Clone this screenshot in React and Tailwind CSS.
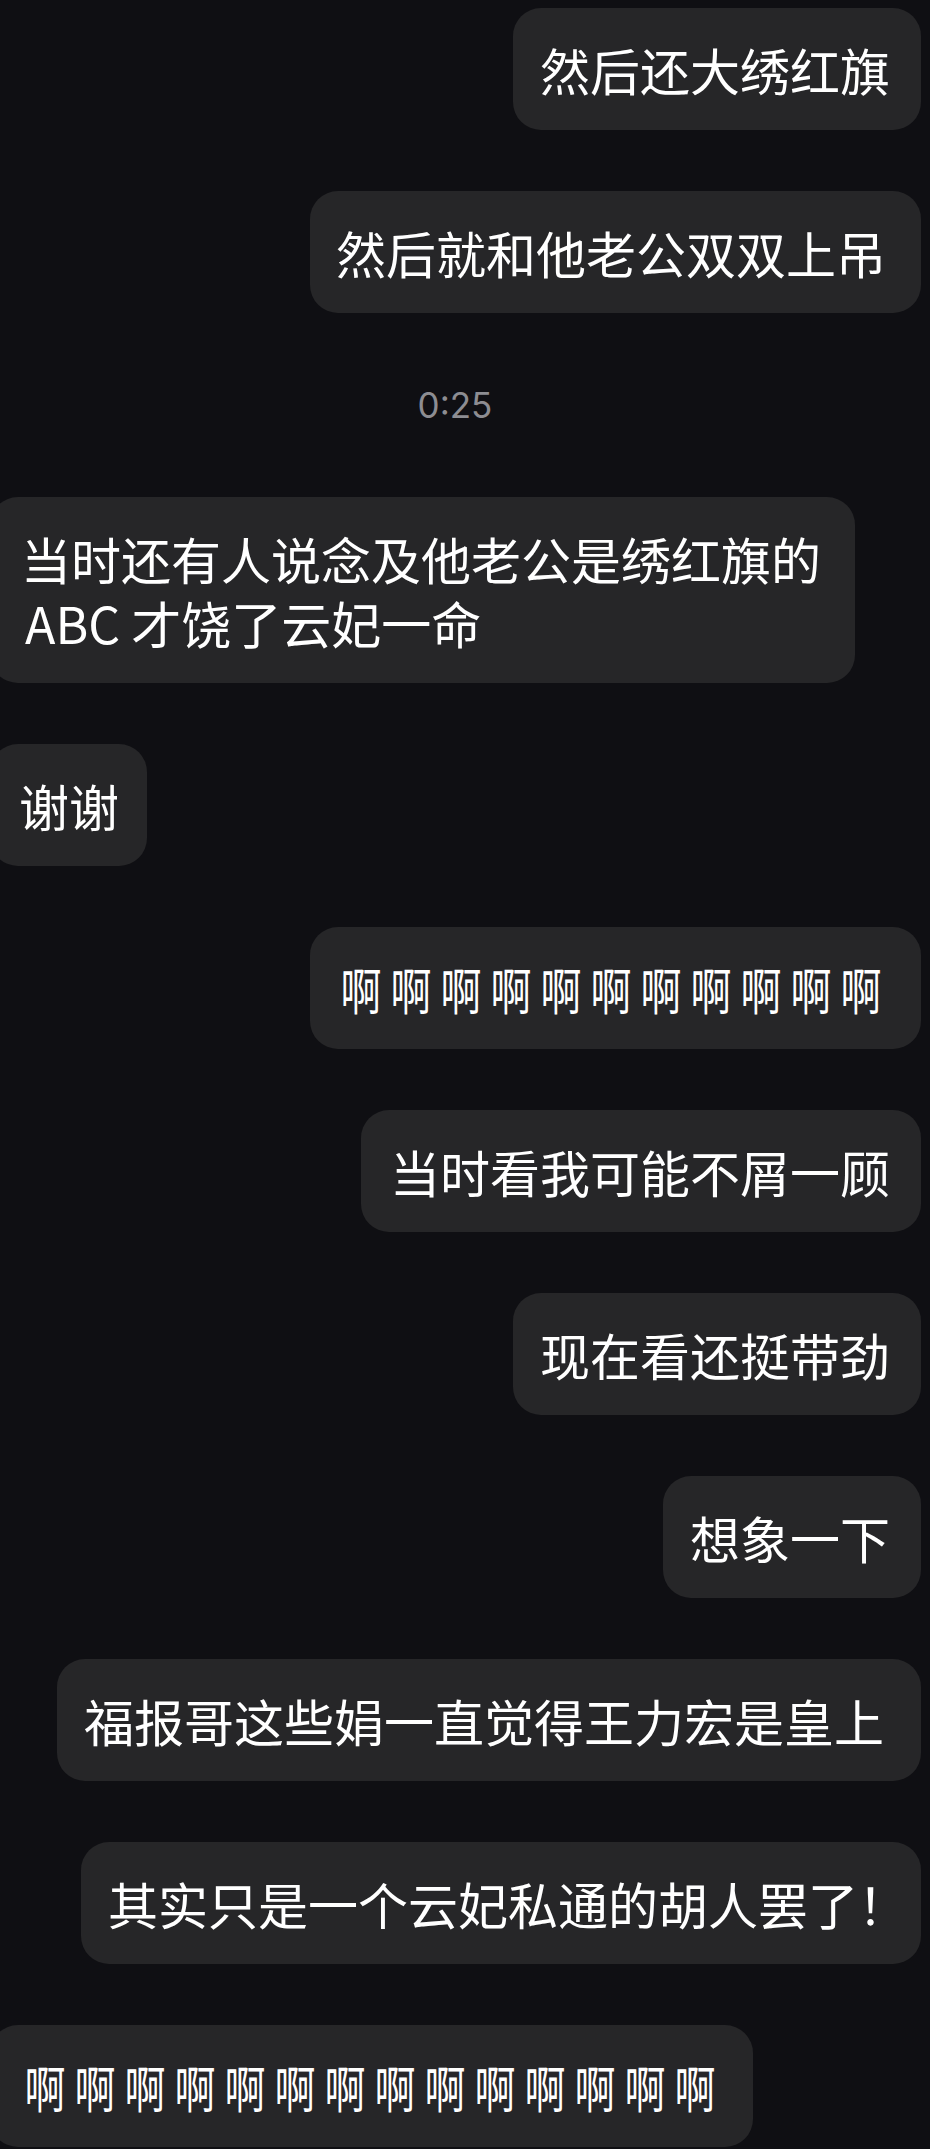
const cjk = "font-['Noto_Sans_CJK_SC','Noto_Sans_CJK_JP',sans-serif]";

// the 啊 rows are drawn narrow in the shot: one squeezed glyph per 50px cell
function Ah({ count }) {
  return (
    <>
      {Array.from({ length: count }).map((_, i) => (
        <span key={i} className="inline-block w-[50px] text-center scale-x-[0.82]">
          啊
        </span>
      ))}
    </>
  );
}

function Bubble({ side, width, pl, children }) {
  const base = `${width} ${pl} py-[29px] leading-[64px] text-[50px] text-white bg-[#262628] rounded-[28px] whitespace-nowrap overflow-hidden`;
  if (side === "right") {
    return (
      <div className="flex justify-end pr-[9px]">
        <div className={base}>{children}</div>
      </div>
    );
  }
  return (
    <div className="flex justify-start -ml-[10px]">
      <div className={base}>{children}</div>
    </div>
  );
}

export default function App() {
  return (
    <div className={`w-[930px] h-[2149px] overflow-hidden bg-[#0f0f13] ${cjk}`}>
      <div className="flex flex-col gap-[61px] pt-[8px]">
        <Bubble side="right" width="w-[408px]" pl="pl-[27px]">
          然后还大绣红旗
        </Bubble>
        <Bubble side="right" width="w-[611px]" pl="pl-[26px]">
          然后就和他老公双双上吊
        </Bubble>

        {/* time stamp */}
        <div className="h-[62px] flex items-center justify-center">
          <span className="font-['Inter',sans-serif] text-[35px] text-[#8d8d92] -ml-[20px]">0:25</span>
        </div>

        <Bubble side="left" width="w-[865px]" pl="pl-[31px]">
          <div>当时还有人说念及他老公是绣红旗的</div>
          <div className="pl-[4px]">ABC 才饶了云妃一命</div>
        </Bubble>
        <Bubble side="left" width="w-[157px]" pl="pl-[29px]">
          谢谢
        </Bubble>
        <Bubble side="right" width="w-[611px]" pl="pl-[26px]">
          <Ah count={11} />
        </Bubble>
        <Bubble side="right" width="w-[560px]" pl="pl-[29px]">
          当时看我可能不屑一顾
        </Bubble>
        <Bubble side="right" width="w-[408px]" pl="pl-[27px]">
          现在看还挺带劲
        </Bubble>
        <Bubble side="right" width="w-[258px]" pl="pl-[27px]">
          想象一下
        </Bubble>
        <Bubble side="right" width="w-[864px]" pl="pl-[27px]">
          福报哥这些娟一直觉得王力宏是皇上
        </Bubble>
        <Bubble side="right" width="w-[840px]" pl="pl-[27px]">
          其实只是一个云妃私通的胡人罢了！
        </Bubble>
        <Bubble side="left" width="w-[763px]" pl="pl-[30px]">
          <Ah count={14} />
        </Bubble>
      </div>
    </div>
  );
}
